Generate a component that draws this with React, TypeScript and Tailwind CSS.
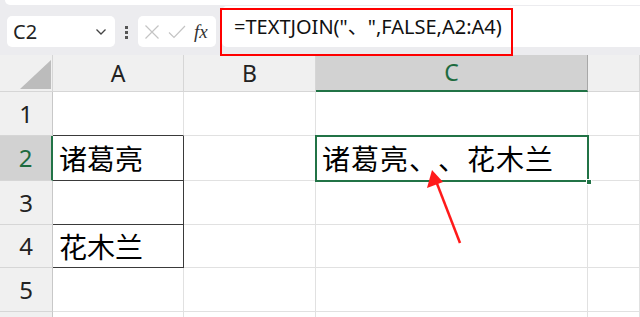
import React from "react";

const font = { fontFamily: '"Noto Sans", "Noto Sans CJK SC", sans-serif' };
const cjk = { fontFamily: '"Noto Sans CJK SC", "Noto Sans", sans-serif' };

const cols = [
  { key: "A", w: "w-[131px]" },
  { key: "B", w: "w-[132px]" },
  { key: "C", w: "w-[272px]" },
  { key: "D", w: "flex-1" },
];

const rows = [
  { n: "1", h: "h-[44px]" },
  { n: "2", h: "h-[45px]" },
  { n: "3", h: "h-[44px]" },
  { n: "4", h: "h-[43px]" },
  { n: "5", h: "h-[44px]" },
  { n: "", h: "h-[44px]" },
];

export default function App() {
  return (
    <div className="relative w-[640px] h-[317px] overflow-hidden bg-white [text-spacing-trim:space-all]" style={font}>
      {/* Toolbar */}
      <div className="relative h-[55px] bg-[#ececef]">
        <div className="absolute left-[5px] right-0 top-0 h-[5px] bg-white rounded-bl-[6px]" />
        <div className="absolute left-[7px] top-[16px] w-[108px] h-[31px] bg-white rounded-[5px] flex items-center pl-[6px] pr-[8px]">
          <span className="text-[20px] text-[#222] leading-none">C2</span>
          <svg className="ml-auto" width="12" height="8" viewBox="0 0 12 8">
            <path d="M1.5 1.5 L6 6 L10.5 1.5" stroke="#444" strokeWidth="1.3" fill="none" />
          </svg>
        </div>
        <div className="absolute left-[125px] top-[26px] flex flex-col gap-[2px]">
          <div className="w-[3px] h-[3px] bg-[#555]" />
          <div className="w-[3px] h-[3px] bg-[#555]" />
          <div className="w-[3px] h-[3px] bg-[#555]" />
        </div>
        <div className="absolute left-[138px] top-[16px] w-[78px] h-[31px] bg-white rounded-[5px] flex items-center pl-[6px] gap-[8px]">
          <svg width="16" height="16" viewBox="0 0 16 16">
            <path d="M1.5 1.5 L14.5 14.5 M14.5 1.5 L1.5 14.5" stroke="#c4c4c4" strokeWidth="1.2" fill="none" />
          </svg>
          <svg width="18" height="16" viewBox="0 0 18 16">
            <path d="M1 8.5 L6 13.5 L17 2" stroke="#c4c4c4" strokeWidth="1.2" fill="none" />
          </svg>
          <span className="text-[19px] italic text-[#333] leading-none" style={{ fontFamily: '"Liberation Serif", serif' }}>
            fx
          </span>
        </div>
        <div className="absolute left-[222px] right-0 top-[6px] h-[41px] bg-white rounded-l-[5px] flex items-center pl-[12px]">
          <span className="text-[20px] text-[#111] leading-none" style={font}>
            =TEXTJOIN("、",FALSE,A2:A4)
          </span>
        </div>
        <div className="absolute left-[220px] top-[8px] w-[293px] h-[48px] border-2 border-[#ff0000]" />
      </div>

      {/* Column headers */}
      <div className="flex h-[37px] bg-[#f0f0f0]">
        <div className="relative w-[53px] border-r border-[#d6d6d6] border-b border-b-[#d6d6d6]">
          <div
            className="absolute left-[20px] top-[5px] w-[31px] h-[29px] bg-[#bcbcbc]"
            style={{ clipPath: "polygon(100% 0, 100% 100%, 0 100%)" }}
          />
        </div>
        {cols.map((c) => (
          <div
            key={c.key}
            className={`${c.w} flex items-center justify-center text-[23px] border-r ${
              c.key === "C"
                ? "bg-[#d2d2d2] border-r-[#a8a8a8] border-b-2 border-b-[#217346] text-[#1e6b3f]"
                : "border-r-[#d6d6d6] border-b border-b-[#d6d6d6] text-[#222]"
            }`}
          >
            {c.key !== "D" ? c.key : ""}
          </div>
        ))}
      </div>

      {/* Rows */}
      {rows.map((r, i) => (
        <div key={i} className={`flex ${r.h}`}>
          <div
            className={`w-[53px] flex items-center justify-center text-[24px] border-b border-[#d6d6d6] ${
              r.n === "2"
                ? "bg-[#d2d2d2] border-r-2 border-r-[#217346] text-[#1e6b3f]"
                : "bg-[#f0f0f0] border-r border-r-[#c8c8c8] text-[#222]"
            }`}
          >
            {r.n}
          </div>
          {cols.map((c) => {
            const inA = c.key === "A" && (r.n === "2" || r.n === "3" || r.n === "4");
            let cls = "border-r border-b border-[#e1e1e1]";
            if (inA) cls = "border-r border-b border-[#3a3a3a]";
            if (c.key === "A" && r.n === "1") cls = "border-r border-b border-r-[#e1e1e1] border-b-[#3a3a3a]";
            return (
              <div key={c.key} className={`${c.w} relative flex items-center ${cls}`}>
                {c.key === "A" && r.n === "2" && (
                  <span className="pl-[6px] text-[28px] text-black leading-none" style={cjk}>诸葛亮</span>
                )}
                {c.key === "A" && r.n === "4" && (
                  <span className="pl-[6px] text-[28px] text-black leading-none" style={cjk}>花木兰</span>
                )}
                {c.key === "C" && r.n === "2" && (
                  <span className="pl-[6px] text-[28px] text-black leading-none tracking-[1px]" style={cjk}>诸葛亮、、花木兰</span>
                )}
              </div>
            );
          })}
        </div>
      ))}

      {/* Selected cell C2 */}
      <div className="absolute left-[315px] top-[135px] w-[274px] h-[47px] border-2 border-[#217346]" />
      <div className="absolute left-[586px] top-[179px] w-[6px] h-[6px] bg-[#217346] border border-white" />

      {/* Red arrow */}
      <svg className="absolute left-0 top-0" width="640" height="317" viewBox="0 0 640 317">
        <line x1="460" y1="243" x2="436" y2="181" stroke="#ff1a1a" strokeWidth="2.5" />
        <polygon points="432,170 427,188 443,182" fill="#ff1a1a" />
      </svg>
    </div>
  );
}
